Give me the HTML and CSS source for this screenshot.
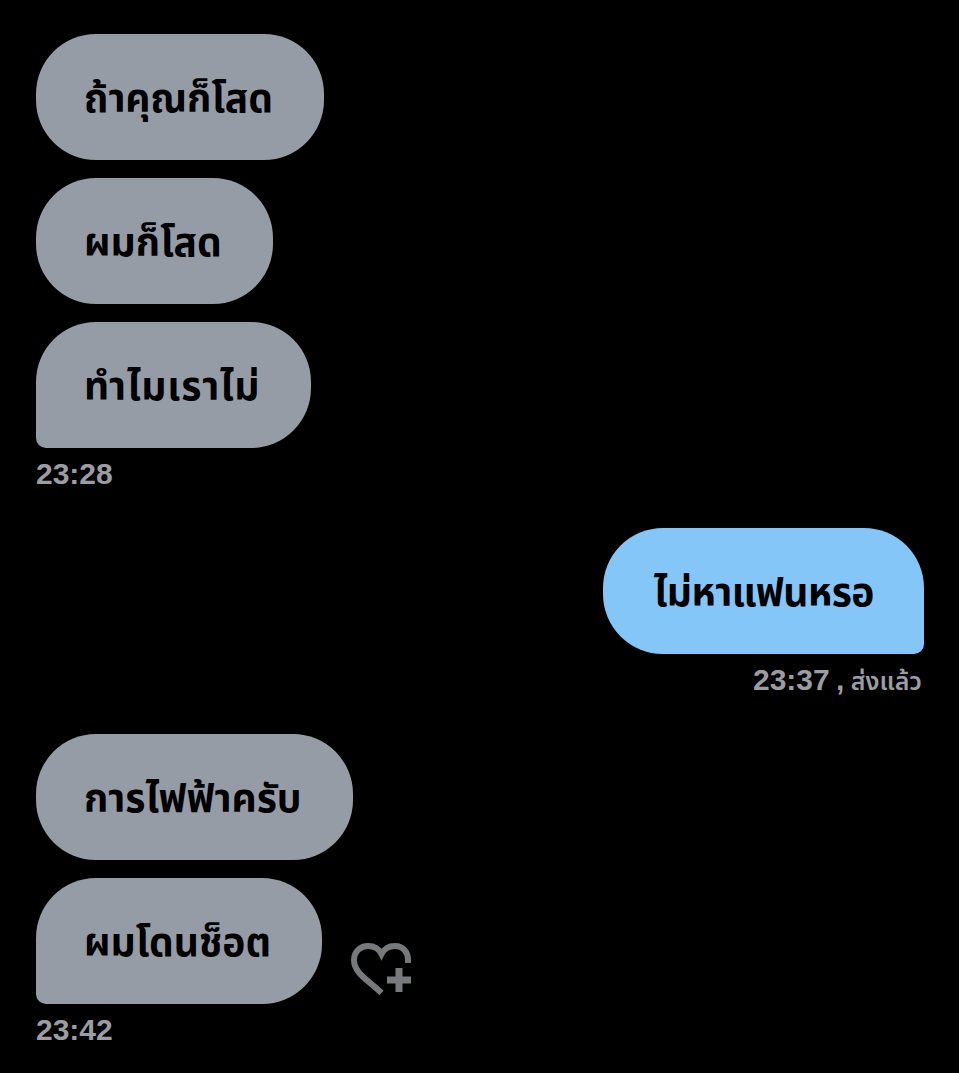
FILE: index.html
```html
<!DOCTYPE html>
<html lang="th">
<head>
    <meta charset="UTF-8">
    <meta name="viewport" content="width=device-width, initial-scale=1.0">
    <title>Chat</title>
    <link rel="stylesheet" href="styles.css">
</head>
<body>
    <div class="chat">
        <div class="group">
            <div class="bubble">ถ้าคุณก็โสด</div>
            <div class="bubble">ผมก็โสด</div>
            <div class="bubble last wide">ทำไมเราไม่</div>
            <div class="time">23:28</div>
        </div>

        <div class="group mine">
            <div class="bubble last">ไม่หาแฟนหรอ</div>
            <div class="time">23:37 <b>,</b> <span class="sent">ส่งแล้ว</span></div>
        </div>

        <div class="group">
            <div class="bubble">การไฟฟ้าครับ</div>
            <div class="row">
                <div class="bubble last">ผมโดนช็อต</div>
                <svg class="react" viewBox="0 0 61 54" width="61" height="54" fill="none" stroke="#77797c" stroke-width="6">
                    <path d="M30.500 51 C17 38 3 31 3 18 C3 9 10 4 17 4 C23 4 28 7 30.500 12 C33 7 38 4 44 4 C52 4 57 10 57 18 V21"/>
                    <path d="M36 38 H60 M48 26 V50" stroke-width="7"/>
                </svg>
            </div>
            <div class="time">23:42</div>
        </div>
    </div>
</body>
</html>
```

FILE: styles.css
```css
* {
    margin: 0;
    padding: 0;
    box-sizing: border-box;
}

body {
    background: #000;
    font-family: "Noto Sans Thai", "Noto Sans", "Liberation Sans", sans-serif;
}

.chat {
    padding: 34px 35px 0 36px;
}

.group {
    display: flex;
    flex-direction: column;
    align-items: flex-start;
    gap: 18px;
    margin-bottom: 40px;
}

.mine {
    align-items: flex-end;
}

.bubble {
    height: 126px;
    padding: 6px 51px 0 48px;
    display: flex;
    align-items: center;
    background: #969ca6;
    border-radius: 60px;
    color: #000;
    font-size: 39px;
    font-weight: 700;
    white-space: nowrap;
}

.wide {
    letter-spacing: 0.8px;
}

.last {
    border-bottom-left-radius: 10px;
}

.mine .bubble {
    padding: 6px 50px 0 51px;
    background: #84c6f8;
    border-bottom-left-radius: 60px;
    border-bottom-right-radius: 10px;
    letter-spacing: -0.5px;
}

.time {
    margin-top: -6px;
    height: 28px;
    line-height: 28px;
    color: #9c9da2;
    font-family: "Liberation Sans", sans-serif;
    font-size: 30px;
    font-weight: 700;
}

.mine .time {
    margin-right: 2px;
    word-spacing: -2px;
}

.sent {
    font-family: "Noto Sans Thai", sans-serif;
    font-size: 25px;
    font-weight: 600;
}

.row {
    display: flex;
    align-items: flex-end;
}

.react {
    margin: 0 0 8px 29px;
}
```
